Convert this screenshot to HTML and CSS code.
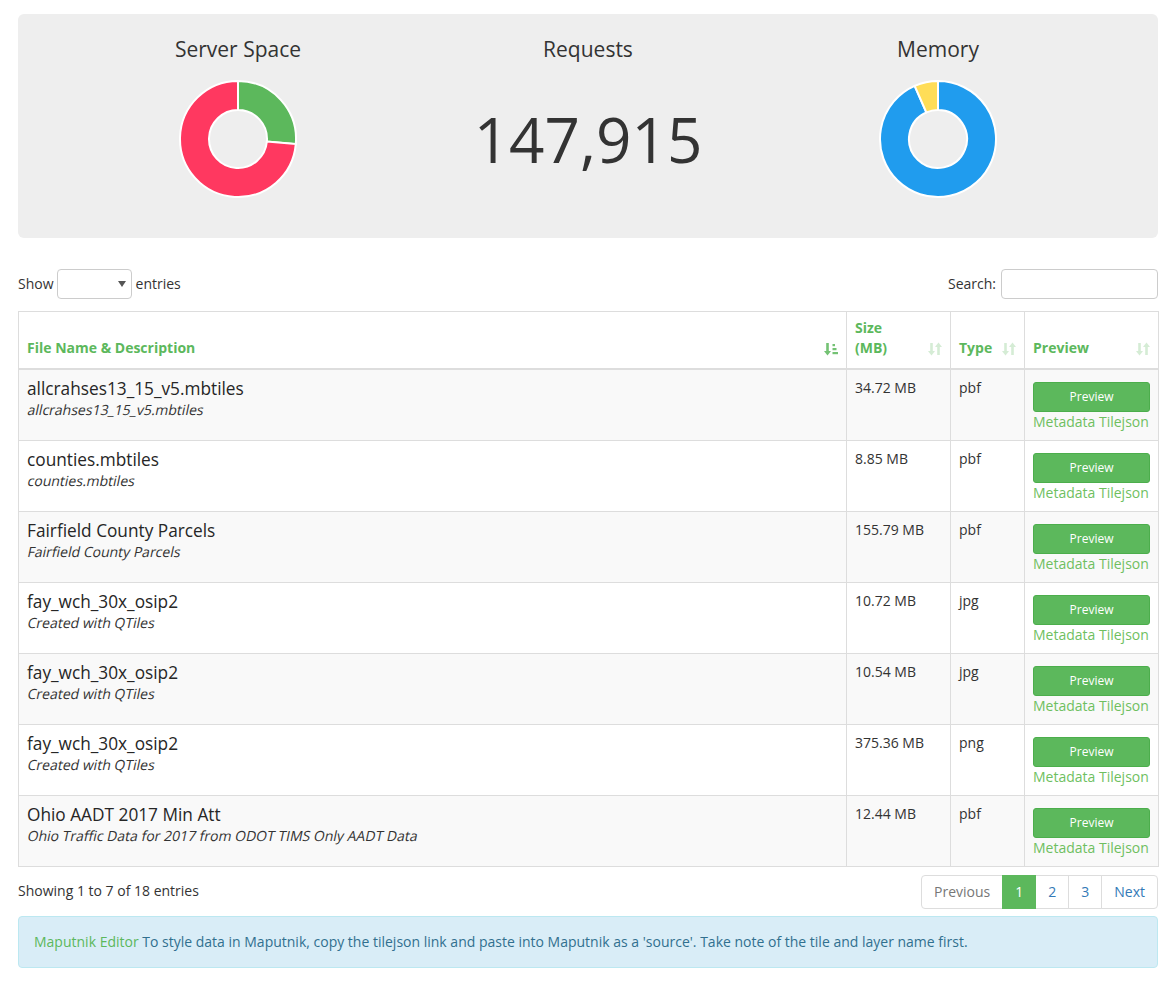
FILE: index.html
```html
<!DOCTYPE html>
<html lang="en">
<head>
<meta charset="utf-8">
<title>Tile Server</title>
<link rel="stylesheet" href="styles.css">
</head>
<body>
<div class="page">
  <section class="well">
    <div class="stat">
      <h3 class="stat-title">Server Space</h3>
      <svg class="donut" width="120" height="120" viewBox="0 0 120 120">
        <path fill="#5cb85c" stroke="#fff" stroke-width="2" d="M60 2 A58 58 0 0 1 117.78 65.06 L88.89 62.53 A29 29 0 0 0 60 31 Z"/>
        <path fill="#ff3860" stroke="#fff" stroke-width="2" d="M117.78 65.06 A58 58 0 1 1 60 2 L60 31 A29 29 0 1 0 88.89 62.53 Z"/>
      </svg>
    </div>
    <div class="stat">
      <h3 class="stat-title">Requests</h3>
      <div class="stat-number">147,915</div>
    </div>
    <div class="stat">
      <h3 class="stat-title">Memory</h3>
      <svg class="donut" width="120" height="120" viewBox="0 0 120 120">
        <path fill="#209cee" stroke="#fff" stroke-width="2" d="M60 2 A58 58 0 1 1 36.69 6.89 L48.34 33.44 A29 29 0 1 0 60 31 Z"/>
        <path fill="#ffdd57" stroke="#fff" stroke-width="2" d="M36.69 6.89 A58 58 0 0 1 60 2 L60 31 A29 29 0 0 0 48.34 33.44 Z"/>
      </svg>
    </div>
  </section>

  <div class="controls">
    <label class="length">Show
      <span class="select-wrap"><select class="select"><option></option></select></span>
      entries</label>
    <label class="search">Search: <input class="input" type="search"></label>
  </div>

  <table class="table">
    <colgroup>
      <col class="c-name"><col class="c-size"><col class="c-type"><col class="c-prev">
    </colgroup>
    <thead>
      <tr>
        <th><div class="th-inner"><span>File Name &amp; Description</span>
          <svg class="sort active" width="14" height="14" viewBox="0 0 14 14"><path d="M2.2 1h2.6v8h2.2L3.5 13.5 0 9h2.2z"/><rect x="8.5" y="2" width="2.5" height="2.2"/><rect x="8.5" y="6" width="4" height="2.2"/><rect x="8.5" y="10" width="5.5" height="2.2"/></svg></div></th>
        <th><div class="th-inner"><span class="wrap">Size (MB)</span>
          <svg class="sort" width="14" height="14" viewBox="0 0 14 14"><path d="M2.2 1h2.6v8h2.2L3.5 13.5 0 9h2.2z"/><path d="M9.2 13h2.6V5h2.2L10.5 0.5 7 5h2.2z"/></svg></div></th>
        <th><div class="th-inner"><span>Type</span>
          <svg class="sort" width="14" height="14" viewBox="0 0 14 14"><path d="M2.2 1h2.6v8h2.2L3.5 13.5 0 9h2.2z"/><path d="M9.2 13h2.6V5h2.2L10.5 0.5 7 5h2.2z"/></svg></div></th>
        <th><div class="th-inner"><span>Preview</span>
          <svg class="sort" width="14" height="14" viewBox="0 0 14 14"><path d="M2.2 1h2.6v8h2.2L3.5 13.5 0 9h2.2z"/><path d="M9.2 13h2.6V5h2.2L10.5 0.5 7 5h2.2z"/></svg></div></th>
      </tr>
    </thead>
    <tbody>
      <tr>
        <td><div class="name">allcrahses13_15_v5.mbtiles</div><div class="desc"><span>allcrahses13_15_v5.mbtiles</span></div></td>
        <td>34.72 MB</td><td>pbf</td>
        <td><a class="btn" href="#">Preview</a><a class="meta" href="#">Metadata Tilejson</a></td>
      </tr>
      <tr>
        <td><div class="name">counties.mbtiles</div><div class="desc"><span>counties.mbtiles</span></div></td>
        <td>8.85 MB</td><td>pbf</td>
        <td><a class="btn" href="#">Preview</a><a class="meta" href="#">Metadata Tilejson</a></td>
      </tr>
      <tr>
        <td><div class="name">Fairfield County Parcels</div><div class="desc"><span>Fairfield County Parcels</span></div></td>
        <td>155.79 MB</td><td>pbf</td>
        <td><a class="btn" href="#">Preview</a><a class="meta" href="#">Metadata Tilejson</a></td>
      </tr>
      <tr>
        <td><div class="name">fay_wch_30x_osip2</div><div class="desc"><span>Created with QTiles</span></div></td>
        <td>10.72 MB</td><td>jpg</td>
        <td><a class="btn" href="#">Preview</a><a class="meta" href="#">Metadata Tilejson</a></td>
      </tr>
      <tr>
        <td><div class="name">fay_wch_30x_osip2</div><div class="desc"><span>Created with QTiles</span></div></td>
        <td>10.54 MB</td><td>jpg</td>
        <td><a class="btn" href="#">Preview</a><a class="meta" href="#">Metadata Tilejson</a></td>
      </tr>
      <tr>
        <td><div class="name">fay_wch_30x_osip2</div><div class="desc"><span>Created with QTiles</span></div></td>
        <td>375.36 MB</td><td>png</td>
        <td><a class="btn" href="#">Preview</a><a class="meta" href="#">Metadata Tilejson</a></td>
      </tr>
      <tr>
        <td><div class="name">Ohio AADT 2017 Min Att</div><div class="desc"><span>Ohio Traffic Data for 2017 from ODOT TIMS Only AADT Data</span></div></td>
        <td>12.44 MB</td><td>pbf</td>
        <td><a class="btn" href="#">Preview</a><a class="meta" href="#">Metadata Tilejson</a></td>
      </tr>
    </tbody>
  </table>

  <div class="footer">
    <div class="info">Showing 1 to 7 of 18 entries</div>
    <ul class="pagination">
      <li class="disabled"><a href="#">Previous</a></li>
      <li class="active"><a href="#">1</a></li>
      <li><a href="#">2</a></li>
      <li><a href="#">3</a></li>
      <li><a href="#">Next</a></li>
    </ul>
  </div>

  <div class="alert"><a href="#">Maputnik Editor</a> To style data in Maputnik, copy the tilejson link and paste into Maputnik as a 'source'. Take note of the tile and layer name first.</div>
</div>
</body>
</html>
```

FILE: styles.css
```css
* { box-sizing: border-box; }
html, body { margin: 0; padding: 0; background: #fff; }
body {
  font-family: "Open Sans", "Liberation Sans", sans-serif;
  font-size: 14px;
  line-height: 20px;
  color: #333;
}
a { text-decoration: none; color: #5cb85c; }

.page {
  width: 1140px;
  margin-left: 18px;
  padding-top: 14px;
}

.well {
  background: #eee;
  border-radius: 6px;
  padding: 22px 0 39px;
  display: grid;
  grid-template-columns: repeat(3, 350px);
  justify-content: center;
}
.stat {
  display: flex;
  flex-direction: column;
  align-items: center;
}
.stat-title {
  margin: 0;
  font-size: 21px;
  line-height: 26px;
  font-weight: 400;
  color: #333;
}
.donut { margin-top: 17px; display: block; }
.stat-number {
  margin-top: 17px;
  height: 120px;
  display: flex;
  align-items: center;
  justify-content: center;
  font-size: 62px;
  line-height: 62px;
  color: #333;
}

.controls {
  margin-top: 31px;
  height: 30px;
  display: flex;
  justify-content: space-between;
  align-items: center;
}
.controls label { display: flex; align-items: center; font-weight: 400; }
.select-wrap {
  position: relative;
  display: inline-block;
  margin: 0 4px 0 3px;
}
.select-wrap::after {
  content: "";
  position: absolute;
  right: 6px;
  top: 12px;
  border-left: 4px solid transparent;
  border-right: 4px solid transparent;
  border-top: 6px solid #555;
}
.select {
  appearance: none;
  -webkit-appearance: none;
  width: 75px;
  height: 30px;
  border: 1px solid #ccc;
  border-radius: 4px;
  background: #fff;
  font: inherit;
  display: block;
}
.input {
  width: 157px;
  height: 30px;
  margin-left: 5px;
  border: 1px solid #ccc;
  border-radius: 4px;
  background: #fff;
  font: inherit;
}

.table {
  margin-top: 12px;
  width: 1140px;
  table-layout: fixed;
  border-collapse: collapse;
  border: 1px solid #ddd;
}
.c-name { width: 828px; }
.c-size { width: 104px; }
.c-type { width: 74px; }
.c-prev { width: 134px; }

.table th {
  padding: 6px 8px 10px;
  text-align: left;
  vertical-align: bottom;
  color: #5cb85c;
  font-weight: 700;
  border: 1px solid #ddd;
  border-bottom-width: 2px;
}
.th-inner {
  display: flex;
  align-items: flex-end;
  justify-content: space-between;
  gap: 4px;
}
.th-inner .wrap { max-width: 48px; }
.sort {
  flex-shrink: 0;
  fill: #5cb85c;
  opacity: 0.25;
  margin-bottom: 2px;
}
.sort.active { opacity: 0.85; }

.table td {
  padding: 8px;
  vertical-align: top;
  border: 1px solid #ddd;
}
.table tbody tr:nth-child(odd) { background: #f9f9f9; }

.name {
  font-size: 17.25px;
  line-height: 22px;
  font-weight: 400;
  color: #262626;
}
.desc span {
  display: inline-block;
  transform: skewX(-12deg);
  transform-origin: left 70%;
}

.btn {
  display: block;
  margin-top: 4px;
  height: 30px;
  line-height: 18px;
  padding: 5px 10px;
  font-size: 12px;
  text-align: center;
  color: #fff;
  background: #5cb85c;
  border: 1px solid #4cae4c;
  border-radius: 3px;
}
.meta {
  display: block;
  color: #6fbf5f;
  white-space: nowrap;
}

.footer {
  margin-top: 8px;
  display: flex;
  justify-content: space-between;
  align-items: flex-start;
}
.info { padding-top: 6px; }
.pagination {
  list-style: none;
  margin: 0;
  padding: 0;
  display: flex;
}
.pagination a {
  display: block;
  padding: 6px 12px;
  line-height: 20px;
  color: #337ab7;
  border: 1px solid #ddd;
  margin-left: -1px;
  background: #fff;
}
.pagination li:first-child a { margin-left: 0; border-radius: 4px 0 0 4px; }
.pagination li:last-child a { border-radius: 0 4px 4px 0; }
.pagination .disabled a { color: #777; }
.pagination .active a { background: #5cb85c; border-color: #5cb85c; color: #fff; position: relative; }

.alert {
  margin-top: 7px;
  padding: 15px;
  background: #d9edf7;
  border: 1px solid #bce8f1;
  border-radius: 4px;
  color: #31708f;
}
.alert a { color: #5cb85c; }
```
